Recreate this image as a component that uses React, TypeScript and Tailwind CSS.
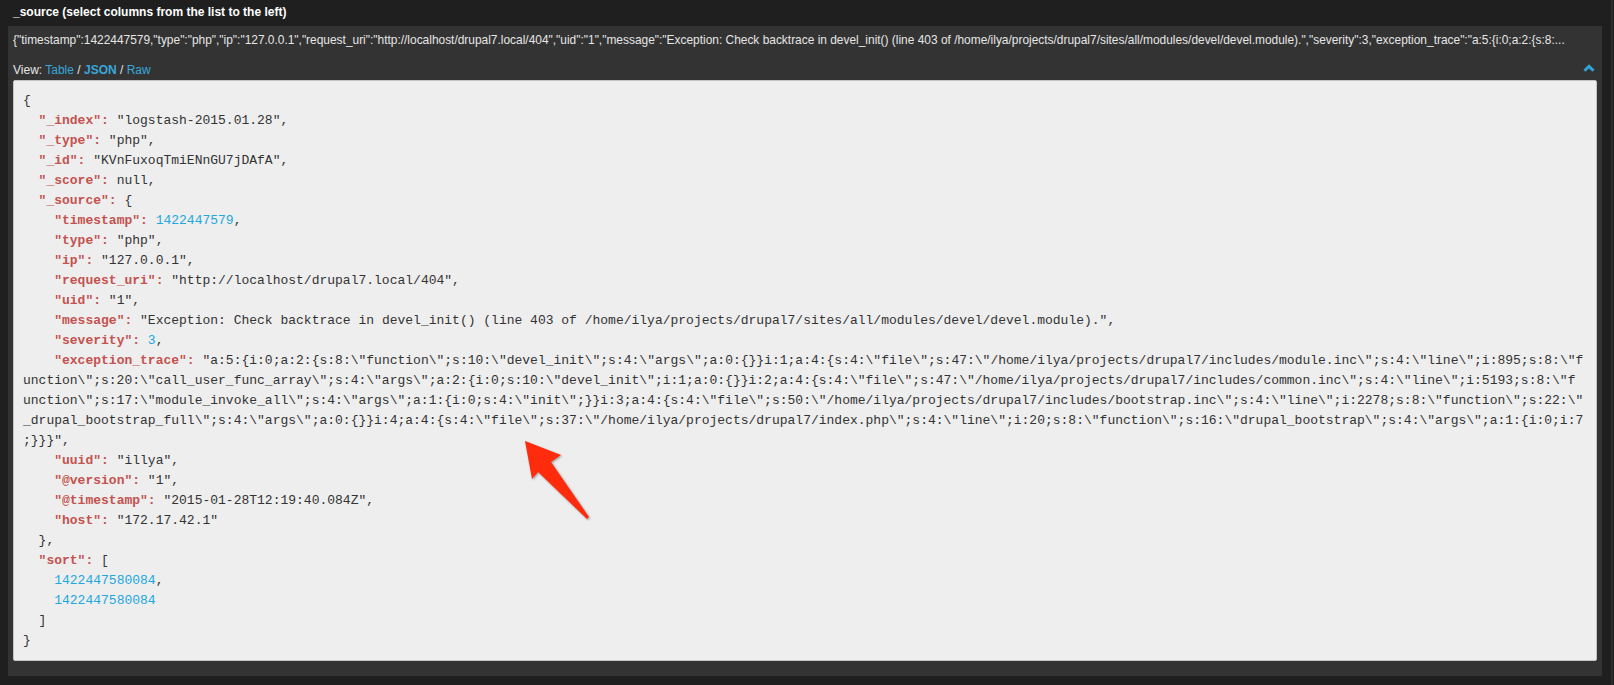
import React from 'react';

interface Row {
  d: number;
  k?: string;
  n?: string;
  v?: string;
}

const rows: Row[] = [
  { d: 0, v: '{' },
  { d: 1, k: '"_index":', v: ' "logstash-2015.01.28",' },
  { d: 1, k: '"_type":', v: ' "php",' },
  { d: 1, k: '"_id":', v: ' "KVnFuxoqTmiENnGU7jDAfA",' },
  { d: 1, k: '"_score":', v: ' null,' },
  { d: 1, k: '"_source":', v: ' {' },
  { d: 2, k: '"timestamp":', n: '1422447579', v: ',' },
  { d: 2, k: '"type":', v: ' "php",' },
  { d: 2, k: '"ip":', v: ' "127.0.0.1",' },
  { d: 2, k: '"request_uri":', v: ' "http://localhost/drupal7.local/404",' },
  { d: 2, k: '"uid":', v: ' "1",' },
  {
    d: 2,
    k: '"message":',
    v: ' "Exception: Check backtrace in devel_init() (line 403 of /home/ilya/projects/drupal7/sites/all/modules/devel/devel.module).",',
  },
  { d: 2, k: '"severity":', n: '3', v: ',' },
  {
    d: 2,
    k: '"exception_trace":',
    v: String.raw` "a:5:{i:0;a:2:{s:8:\"function\";s:10:\"devel_init\";s:4:\"args\";a:0:{}}i:1;a:4:{s:4:\"file\";s:47:\"/home/ilya/projects/drupal7/includes/module.inc\";s:4:\"line\";i:895;s:8:\"f`,
  },
  {
    d: 0,
    v: String.raw`unction\";s:20:\"call_user_func_array\";s:4:\"args\";a:2:{i:0;s:10:\"devel_init\";i:1;a:0:{}}i:2;a:4:{s:4:\"file\";s:47:\"/home/ilya/projects/drupal7/includes/common.inc\";s:4:\"line\";i:5193;s:8:\"f`,
  },
  {
    d: 0,
    v: String.raw`unction\";s:17:\"module_invoke_all\";s:4:\"args\";a:1:{i:0;s:4:\"init\";}}i:3;a:4:{s:4:\"file\";s:50:\"/home/ilya/projects/drupal7/includes/bootstrap.inc\";s:4:\"line\";i:2278;s:8:\"function\";s:22:\"`,
  },
  {
    d: 0,
    v: String.raw`_drupal_bootstrap_full\";s:4:\"args\";a:0:{}}i:4;a:4:{s:4:\"file\";s:37:\"/home/ilya/projects/drupal7/index.php\";s:4:\"line\";i:20;s:8:\"function\";s:16:\"drupal_bootstrap\";s:4:\"args\";a:1:{i:0;i:7`,
  },
  { d: 0, v: ';}}}",' },
  { d: 2, k: '"uuid":', v: ' "illya",' },
  { d: 2, k: '"@version":', v: ' "1",' },
  { d: 2, k: '"@timestamp":', v: ' "2015-01-28T12:19:40.084Z",' },
  { d: 2, k: '"host":', v: ' "172.17.42.1"' },
  { d: 1, v: '},' },
  { d: 1, k: '"sort":', v: ' [' },
  { d: 2, n: '1422447580084', v: ',' },
  { d: 2, n: '1422447580084' },
  { d: 1, v: ']' },
  { d: 0, v: '}' },
];

const topLine =
  '{"timestamp":1422447579,"type":"php","ip":"127.0.0.1","request_uri":"http://localhost/drupal7.local/404","uid":"1","message":"Exception: Check backtrace in devel_init() (line 403 of /home/ilya/projects/drupal7/sites/all/modules/devel/devel.module).","severity":3,"exception_trace":"a:5:{i:0;a:2:{s:8:...';

const App = () => {
  return (
    <div className="relative flex w-[1614px] h-[685px] bg-[#1f1f1f] overflow-hidden font-['Liberation_Sans',Arial,sans-serif]">
      <div className="w-[1602px] flex flex-col">
        {/* header */}
        <div className="h-[26px] pl-[13px] pt-[5px] text-[12px] leading-[14px] font-bold text-white">
          _source (select columns from the list to the left)
        </div>

        <div className="ml-[8px] w-[1594px] bg-[#333333] px-[5px] pb-[15px]">
          <div className="h-[30px] pt-[7px] text-[11.93px] leading-[14px] text-[#e6e6e6] whitespace-nowrap overflow-hidden">
            {topLine}
          </div>

          <div className="h-[24px] flex items-end justify-between pb-[3px] text-[12px] leading-[14px] text-[#e6e6e6]">
            <div>
              View: <span className="text-[#38a7da]">Table</span> /{' '}
              <span className="font-bold text-[#38a7da]">JSON</span> /{' '}
              <span className="text-[#38a7da]">Raw</span>
            </div>
            <svg width="12" height="8" viewBox="0 0 12 8" className="mb-[5px] mr-[2px]">
              <polyline
                points="1.5,6.8 6,2.3 10.5,6.8"
                fill="none"
                stroke="#2ea6dc"
                strokeWidth="3"
              />
            </svg>
          </div>

          <div className="bg-[#eeeeee] border border-[#c4c4c4] rounded-[2px] pl-[9px] pt-[10px] pb-[9px] font-['Liberation_Mono',monospace] text-[13px] leading-[20px] text-[#333333]">
            {rows.map((r, i) => (
              <div key={i} className="h-[20px] whitespace-pre">
                {'  '.repeat(r.d)}
                {r.k && <span className="font-bold text-[#c4524f]">{r.k}</span>}
                {r.n && (
                  <>
                    {r.k ? ' ' : ''}
                    <span className="text-[#21a8e0]">{r.n}</span>
                  </>
                )}
                {r.v}
              </div>
            ))}
          </div>
        </div>
      </div>

      {/* scrollbar strip */}
      <div className="flex-1 flex justify-end">
        <div className="w-[2px] mr-[1px] bg-[#2b2b2b]" />
      </div>

      {/* annotation arrow */}
      <svg
        className="absolute left-0 top-0 pointer-events-none drop-shadow-[1px_1px_1px_rgba(0,0,0,0.35)]"
        width="1614"
        height="685"
      >
        <polygon
          points="525,441 561,455 551,462 589,517 587,519 538,472 532,479"
          fill="#fe2c0c"
        />
      </svg>
    </div>
  );
};

export default App;
